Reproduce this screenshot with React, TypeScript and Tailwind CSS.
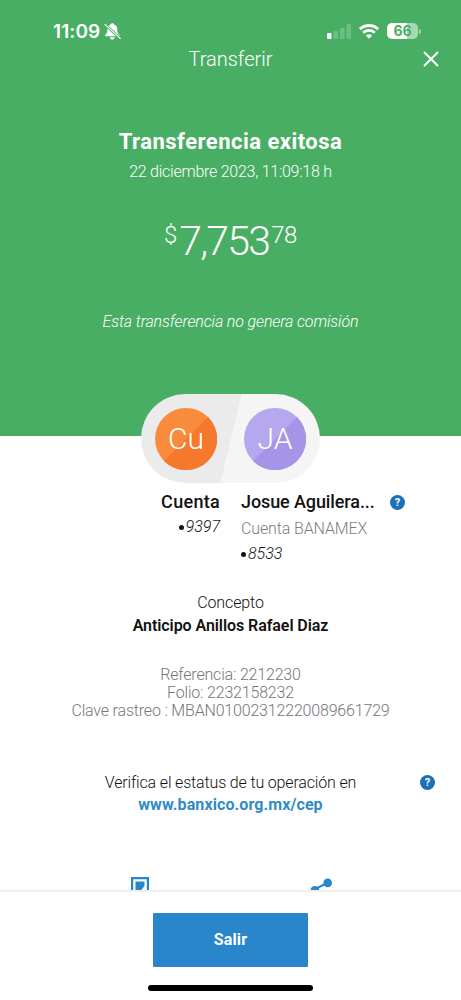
type AvatarProps = {
  initials: string;
  base: string;
  shade: string;
};

const BellOff = () => (
  <svg width="17" height="17" viewBox="0 0 17 17">
    <path
      d="M8.300.3c-1 0-1.600.6-1.700 1.300C4.400 2.300 3.500 4 3.500 6.400c0 3-.9 4.200-2.200 5.400-.6.6-.3 1.500.6 1.500h12.900c.9 0 1.200-.9.6-1.500-1.300-1.200-2.200-2.400-2.200-5.400 0-2.400-.9-4.100-3.100-4.800C10 .9 9.300.3 8.300.3zM5.900 14.200c.3 1.500 1.300 2.300 2.400 2.300s2.100-.8 2.400-2.300z"
      fill="#fff"
    />
    <path d="M.8 1.200l15.600 14.400" stroke="#48ae64" strokeWidth="2.800" />
    <path d="M1 1.400l15.200 14" stroke="#fff" strokeWidth="1.200" strokeLinecap="round" />
  </svg>
);

const Signal = () => (
  <svg width="24" height="15" viewBox="0 0 24 15" fill="#fff">
    <rect x="0" y="9" width="4.500" height="6" rx="1" />
    <rect x="6.500" y="7" width="4.500" height="8" rx="1" opacity=".2" />
    <rect x="13" y="4" width="4.500" height="11" rx="1" opacity=".2" />
    <rect x="19.500" y="0" width="4.500" height="15" rx="1" opacity=".2" />
  </svg>
);

const Wifi = () => (
  <svg width="20" height="15" viewBox="0 0 20 15" fill="none" stroke="#fff" strokeWidth="2.800">
    <path d="M.9 5.200a13 13 0 0 1 18.200 0" />
    <path d="M4.200 8.700a8.300 8.300 0 0 1 11.600 0" />
    <path d="M10 14.800L6.900 11.600a4.500 4.500 0 0 1 6.200 0z" fill="#fff" stroke="none" />
  </svg>
);

const Battery = () => (
  <div className="flex items-center">
    <div className="flex h-[16px] w-[31px] items-center justify-center rounded-[5px] bg-[linear-gradient(90deg,#fff_66%,#a6d8b3_66%)] font-['Inter'] text-[14px] font-bold leading-none text-[#48ae64]">
      66
    </div>
    <div className="ml-px h-[5px] w-[2px] rounded-r-full bg-[#a6d8b3]" />
  </div>
);

const Help = () => (
  <div className="flex size-[15px] items-center justify-center rounded-full bg-[#1b70b8] text-[11px] font-bold leading-none text-white">
    ?
  </div>
);

const Avatar = ({ initials, base, shade }: AvatarProps) => (
  <svg width="62" height="62" viewBox="0 0 62 62">
    <circle cx="31" cy="31" r="31" fill={base} />
    <path d="M53 9A31 31 0 0 1 9 53z" fill={shade} />
    <text
      x="31"
      y="41"
      textAnchor="middle"
      fill="#fff"
      fontSize="30"
      fontWeight="300"
      fontFamily="Roboto, sans-serif"
    >
      {initials}
    </text>
  </svg>
);

const AccountNumber = ({ digits }: { digits: string }) => (
  <div className="inline-flex h-[24px] items-center gap-[2px] align-top">
    <span className="size-[5px] rounded-full bg-[#121212]" />
    <span className="text-[16px] font-light italic leading-[24px]">{digits}</span>
  </div>
);

const ReceiptIcon = () => (
  <svg width="18" height="22" viewBox="0 0 18 22">
    <path d="M1.100 22V1.100h15.800V22" fill="none" stroke="#2a86ca" strokeWidth="2.200" />
    <path d="M4.500 4.500h9v4.500l-5.500 7H4.500z" fill="#2a86ca" />
  </svg>
);

const ShareIcon = () => (
  <svg width="22" height="22" viewBox="0 0 22 22" fill="#2a86ca">
    <path d="M4.500 12.500L17 6" stroke="#2a86ca" strokeWidth="2" />
    <circle cx="17.700" cy="5.900" r="4.300" />
    <circle cx="4.900" cy="13.200" r="4.300" />
  </svg>
);

const Header = () => (
  <header className="h-[436px] bg-[#48ae64] text-center text-white">
    <div className="flex h-[45px] items-end justify-between pl-[53px] pr-[40px]">
      <div className="flex h-[28px] items-center gap-[4px]">
        <span className="font-['Inter'] text-[19px] font-semibold leading-none tracking-[0.1px]">
          11:09
        </span>
        <BellOff />
      </div>
      <div className="flex h-[28px] items-center gap-[8px]">
        <Signal />
        <Wifi />
        <Battery />
      </div>
    </div>
    <div className="grid h-[28px] grid-cols-[1fr_auto_1fr] items-center">
      <span />
      <h1 className="text-[20px] font-light leading-[28px]">Transferir</h1>
      <svg className="mr-[22px] justify-self-end" width="16" height="16" viewBox="0 0 16 16">
        <path d="M1.500 1.500l13 13M14.500 1.500l-13 13" stroke="#fff" strokeWidth="2" strokeLinecap="round" />
      </svg>
    </div>
    <h2 className="mt-[54px] text-[22px] font-bold leading-[30px] tracking-[0.47px]">
      Transferencia exitosa
    </h2>
    <p className="mt-[5px] text-[16px] font-light leading-[20px] tracking-[-0.25px]">
      22 diciembre 2023, 11:09:18 h
    </p>
    <div className="mt-[34px] flex h-[50px] items-start justify-center font-light">
      <span className="mr-[2px] text-[24px] leading-[38px]">$</span>
      <span className="text-[41px] leading-[50px] tracking-[-1.800px]">7,753</span>
      <span className="ml-[2px] text-[24px] leading-[38px] tracking-[-0.4px]">78</span>
    </div>
    <p className="mt-[46px] text-[16px] font-light italic leading-[20px] tracking-[-0.13px]">
      Esta transferencia no genera comisión
    </p>
  </header>
);

const Accounts = () => (
  <section>
    <div className="relative -mt-[42px] ml-[141px] flex h-[89px] w-[179px] items-center justify-between rounded-full bg-[linear-gradient(103.500deg,#ebebeb_50%,#f5f5f5_50.500%)] px-[14px]">
      <Avatar initials="Cu" base="#f98b3c" shade="#f5782d" />
      <Avatar initials="JA" base="#b6a8ee" shade="#a594e8" />
    </div>
    <div className="mt-[6px] grid h-[77px] grid-cols-[220px_1fr] gap-x-[21px]">
      <div className="text-right">
        <p className="text-[18px] font-medium leading-[26px] tracking-[0.3px]">Cuenta</p>
        <AccountNumber digits="9397" />
      </div>
      <div>
        <div className="flex h-[26px] items-center">
          <p className="w-[149px] text-[18px] font-medium leading-[26px] tracking-[-0.1px]">
            Josue Aguilera...
          </p>
          <Help />
        </div>
        <p className="text-[16px] font-light leading-[27px] tracking-[-0.13px] text-[#7d7d7d]">
          Cuenta BANAMEX
        </p>
        <AccountNumber digits="8533" />
      </div>
    </div>
  </section>
);

const Details = () => (
  <section className="text-center">
    <p className="mt-[26px] text-[16px] font-light leading-[22px] tracking-[-0.1px]">Concepto</p>
    <p className="text-[16px] font-semibold leading-[24px] tracking-[-0.07px]">
      Anticipo Anillos Rafael Diaz
    </p>
    <div className="mt-[28px] text-[16px] font-light leading-[18px] tracking-[-0.18px] text-[#757575]">
      <p>Referencia: 2212230</p>
      <p>Folio: 2232158232</p>
      <p>Clave rastreo : MBAN01002312220089661729</p>
    </div>
    <div className="mt-[51px] grid h-[22px] grid-cols-[1fr_auto_1fr] items-center">
      <span />
      <p className="text-[16px] font-light tracking-[-0.16px]">
        Verifica el estatus de tu operación en
      </p>
      <div className="mr-[26px] pb-px justify-self-end">
        <Help />
      </div>
    </div>
    <p className="text-[16px] font-bold leading-[24px] tracking-[0.1px] text-[#318bc4]">
      www.banxico.org.mx/cep
    </p>
    <div className="mt-[60px] flex h-[13px] items-start justify-between overflow-hidden pl-[131px] pr-[129px]">
      <ReceiptIcon />
      <ShareIcon />
    </div>
  </section>
);

const Footer = () => (
  <footer className="flex flex-1 flex-col items-center border-t-2 border-[#efefef] bg-white">
    <button className="mt-[21px] h-[54px] w-[155px] rounded-[1px] bg-[#2a86ca] text-[16px] font-bold tracking-[0.2px] text-white">
      Salir
    </button>
    <div className="mt-[18px] h-[6px] w-[165px] rounded-full bg-black" />
  </footer>
);

export default function App() {
  return (
    <main className="flex h-[1000px] w-[461px] flex-col overflow-hidden bg-white font-['Roboto',sans-serif] text-[#121212]">
      <Header />
      <Accounts />
      <Details />
      <Footer />
    </main>
  );
}
